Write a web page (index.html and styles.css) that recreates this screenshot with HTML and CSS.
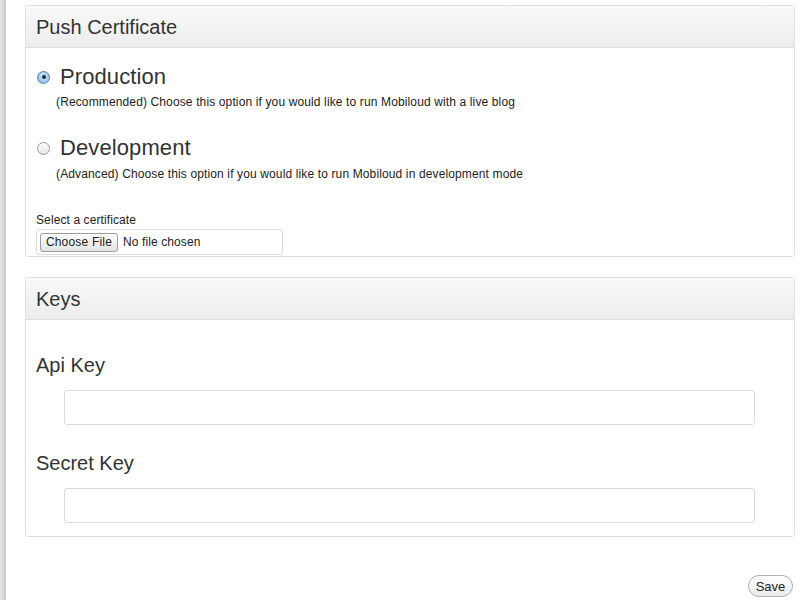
FILE: index.html
```html
<!DOCTYPE html>
<html>
<head>
<meta charset="utf-8">
<link rel="stylesheet" href="styles.css">
</head>
<body>
<div class="layout">
  <div class="edge"></div>
  <div class="main">
    <section class="panel">
      <header class="panel-head"><h2>Push Certificate</h2></header>
      <div class="panel-body cert-body">
        <label class="option">
          <span class="radio checked"></span>
          <span class="option-title">Production</span>
        </label>
        <p class="desc">(Recommended) Choose this option if you would like to run Mobiloud with a live blog</p>
        <label class="option second">
          <span class="radio"></span>
          <span class="option-title">Development</span>
        </label>
        <p class="desc desc-second">(Advanced) Choose this option if you would like to run Mobiloud in development mode</p>
        <p class="select-label">Select a certificate</p>
        <div class="file-box">
          <button class="file-btn" type="button">Choose File</button>
          <span class="file-name">No file chosen</span>
        </div>
      </div>
    </section>
    <section class="panel">
      <header class="panel-head"><h2>Keys</h2></header>
      <div class="panel-body keys-body">
        <h3 class="key-label">Api Key</h3>
        <input class="key-input" type="text">
        <h3 class="key-label second-key">Secret Key</h3>
        <input class="key-input" type="text">
      </div>
    </section>
    <div class="actions">
      <button class="save" type="button">Save</button>
    </div>
  </div>
</div>
</body>
</html>
```
FILE: styles.css
```css
* { box-sizing: border-box; }
html, body { margin: 0; padding: 0; background: #fff; }
body {
  font-family: "Liberation Sans", Arial, sans-serif;
  color: #333;
  width: 800px;
  height: 600px;
  overflow: hidden;
}
.layout { display: flex; height: 600px; }
.edge {
  width: 6px;
  flex: none;
  background: linear-gradient(to right, #e4e4e4, #d0d0d0 85%, #c6c6c6);
}
.main {
  flex: 1;
  padding: 5px 5px 0 19px;
  display: flex;
  flex-direction: column;
}
.panel {
  border: 1px solid #dfdfdf;
  border-radius: 3px;
  background: #fff;
}
.panel + .panel { margin-top: 20px; }
.panel-head {
  height: 42px;
  background: linear-gradient(to bottom, #f9f9f9, #ececec);
  border-bottom: 1px solid #dcdcdc;
  border-radius: 3px 3px 0 0;
  display: flex;
  align-items: center;
  padding: 2px 10px 0 10px;
}
.panel-head h2 {
  margin: 0;
  font-size: 20px;
  font-weight: normal;
  color: #333;
}
.panel-body { padding: 0 10px; }
.cert-body { padding-top: 14px; padding-bottom: 1px; }
.option {
  display: flex;
  align-items: center;
  height: 30px;
  padding-left: 1px;
}
.option.second { margin-top: 23px; }
.radio {
  width: 13px;
  height: 13px;
  border-radius: 50%;
  border: 1px solid #9a9a9a;
  background: linear-gradient(to bottom, #fdfdfd, #e6e6e6);
  margin-right: 10px;
  position: relative;
  flex: none;
}
.radio.checked {
  border-color: #5a7fb0;
  background: radial-gradient(circle at 50% 40%, #d6ebff, #8dbbe8 80%);
}
.radio.checked::after {
  content: "";
  position: absolute;
  left: 3.5px;
  top: 3.5px;
  width: 4px;
  height: 4px;
  border-radius: 50%;
  background: #1c2a3c;
}
.option-title {
  font-size: 22px;
  color: #333;
  letter-spacing: 0.1px;
}
.desc {
  margin: 2px 0 0 20px;
  font-size: 12px;
  line-height: 16px;
  color: #222;
  letter-spacing: 0.13px;
}
.desc-second { margin-top: 3px; }
.select-label {
  margin: 30px 0 1px 0;
  font-size: 12px;
  line-height: 16px;
  color: #222;
  letter-spacing: 0.1px;
}
.file-box {
  width: 247px;
  height: 26px;
  border: 1px solid #dcdcdc;
  border-radius: 3px;
  display: flex;
  align-items: center;
  padding-left: 3px;
}
.file-btn {
  font-family: "Liberation Sans", Arial, sans-serif;
  font-size: 12px;
  color: #222;
  height: 19px;
  width: 78px;
  padding: 0;
  border: 1px solid #9d9d9d;
  border-radius: 3px;
  background: linear-gradient(to bottom, #fdfdfd, #e3e3e3);
  letter-spacing: 0.2px;
}
.file-name {
  font-size: 12px;
  color: #222;
  margin-left: 5px;
  letter-spacing: 0.1px;
}
.keys-body { padding-top: 33px; padding-bottom: 13px; }
.key-label {
  margin: 0;
  font-size: 20px;
  line-height: 24px;
  font-weight: normal;
  color: #333;
}
.second-key { margin-top: 26px; }
.key-input {
  display: block;
  margin: 13px 0 0 28px;
  width: 691px;
  height: 35px;
  border: 1px solid #dcdcdc;
  border-radius: 3px;
  background: #fff;
  outline: none;
}
.actions {
  display: flex;
  justify-content: flex-end;
  margin-top: 38px;
  padding-right: 2px;
}
.save {
  font-family: "Liberation Sans", Arial, sans-serif;
  font-size: 13px;
  color: #222;
  width: 45px;
  height: 22px;
  padding: 0;
  border: 1px solid #b0b0b0;
  border-radius: 11px;
  background: linear-gradient(to bottom, #ffffff, #ececec);
}
```
